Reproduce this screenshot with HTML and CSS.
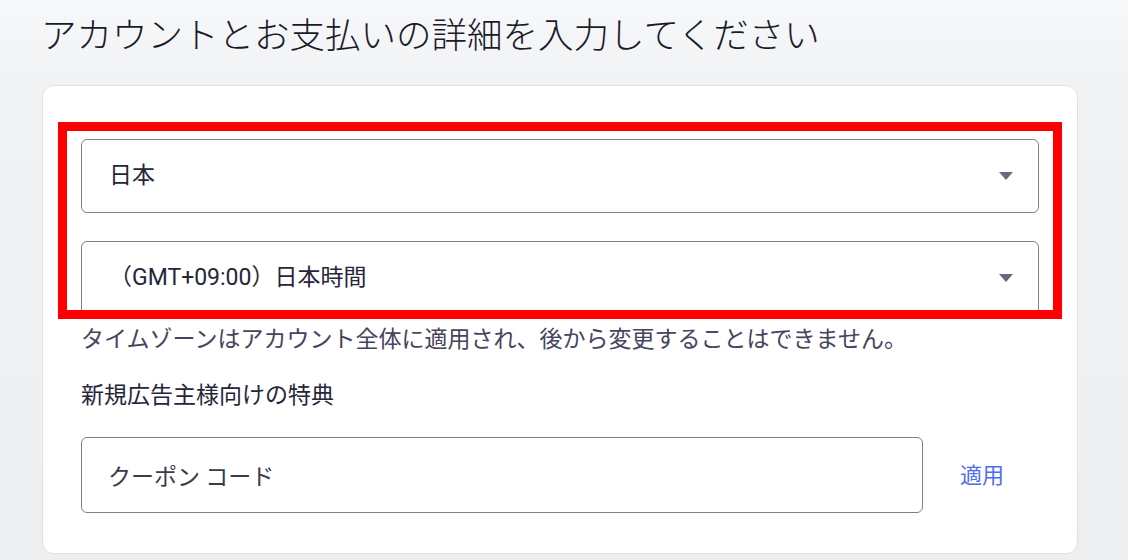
FILE: index.html
```html
<!DOCTYPE html>
<html lang="ja">
<head>
<meta charset="utf-8">
<title>アカウントとお支払いの詳細</title>
<link rel="stylesheet" href="styles.css">
</head>
<body>
<div class="page">
  <h1 class="title">アカウントとお支払いの詳細を入力してください</h1>
  <div class="card">
    <div class="select">
      <span class="select-value">日本</span>
      <span class="caret"></span>
    </div>
    <div class="select select-gap">
      <span class="select-value">（GMT+09:00）日本時間</span>
      <span class="caret"></span>
    </div>
    <p class="helper">タイムゾーンはアカウント全体に適用され、後から変更することはできません。</p>
    <p class="label">新規広告主様向けの特典</p>
    <div class="coupon-row">
      <input class="coupon-input" type="text" placeholder="クーポン コード">
      <a class="apply" href="#">適用</a>
    </div>
    <div class="highlight"></div>
  </div>
</div>
</body>
</html>
```

FILE: styles.css
```css
html, body {
  margin: 0;
  padding: 0;
}

body {
  background: linear-gradient(180deg, #f7f8f9 0px, #f0f2f4 90px, #eceef0 560px);
  font-family: Roboto, "Noto Sans CJK JP", "Noto Sans", sans-serif;
  color: #24232f;
  height: 560px;
  overflow: hidden;
}

.page {
  padding: 10px 50px 0 41px;
}

.title {
  margin: 0 0 29px 0;
  font-family: "Noto Sans CJK JP", sans-serif;
  font-size: 35.5px;
  line-height: 46px;
  font-weight: 300;
  color: #1b1a2b;
  letter-spacing: 0;
}

.card {
  position: relative;
  margin-left: 1px;
  width: 1034px;
  box-sizing: content-box;
  background: #ffffff;
  border: 1px solid #dfe1e6;
  border-radius: 12px;
  padding: 53px 0 40px 0;
}

.card > * {
  margin-left: 38px;
  margin-right: 38px;
}

.select {
  height: 74px;
  box-sizing: border-box;
  border: 1px solid #7f7e91;
  border-radius: 6px;
  display: flex;
  align-items: center;
  justify-content: space-between;
  padding: 0 25px 0 27px;
  font-size: 23px;
  color: #26253a;
}

.select-gap {
  margin-top: 28px;
}

.select-value {
  line-height: 30px;
  font-family: Roboto, "Noto Sans CJK JP", sans-serif;
}

.caret {
  width: 0;
  height: 0;
  border-left: 7.5px solid transparent;
  border-right: 7.5px solid transparent;
  border-top: 8px solid #666a7e;
}

.helper {
  margin-top: 6px;
  margin-bottom: 0;
  font-family: "Noto Sans CJK JP", sans-serif;
  font-size: 23px;
  line-height: 33px;
  color: #46445e;
}

.label {
  margin-top: 23px;
  margin-bottom: 0;
  font-family: "Noto Sans CJK JP", sans-serif;
  font-size: 23px;
  line-height: 33px;
  color: #26253a;
}

.coupon-row {
  margin-top: 27px;
  display: flex;
  align-items: center;
  gap: 37px;
}

.coupon-input {
  width: 842px;
  height: 76px;
  box-sizing: border-box;
  border: 1px solid #7f7e91;
  border-radius: 6px;
  padding: 0 0 0 26px;
  font-family: "Noto Sans CJK JP", sans-serif;
  font-size: 23px;
  color: #26253a;
  background: #ffffff;
  outline: none;
}

.coupon-input::placeholder {
  color: #3a394e;
  opacity: 1;
}

.apply {
  font-family: "Noto Sans CJK JP", sans-serif;
  font-size: 22px;
  line-height: 30px;
  color: #526cf0;
  text-decoration: none;
  margin-top: -4px;
}

.highlight {
  position: absolute;
  left: 15px;
  top: 36px;
  width: 1004px;
  height: 197px;
  box-sizing: border-box;
  border: 9.5px solid #ff0000;
  margin: 0;
  pointer-events: none;
}
```
